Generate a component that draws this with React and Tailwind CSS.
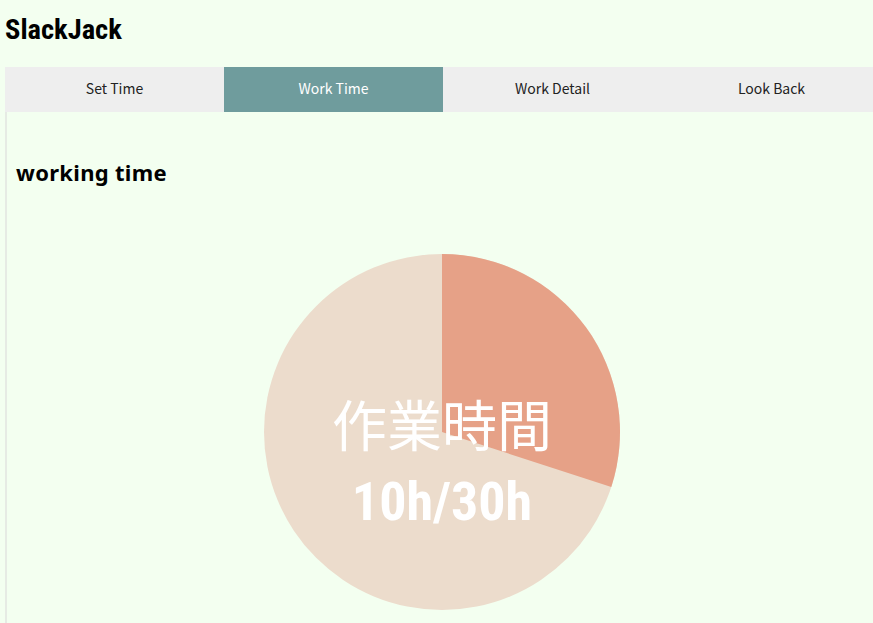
import React from "react";

const tabs = ["Set Time", "Work Time", "Work Detail", "Look Back"];

function polar(cx, cy, r, deg) {
  const a = ((deg - 90) * Math.PI) / 180;
  return [cx + r * Math.cos(a), cy + r * Math.sin(a)];
}

function WorkPie({ done, total, angle }) {
  const r = 178;
  const c = 180;
  const [x1, y1] = polar(c, c, r, 0);
  const [x2, y2] = polar(c, c, r, angle);
  return (
    <div className="relative w-[360px] h-[360px]">
      <svg width="360" height="360" viewBox="0 0 360 360">
        <circle cx={c} cy={c} r={r} fill="#ecdccc" />
        <path
          d={`M${c},${c} L${x1},${y1} A${r},${r} 0 0 1 ${x2},${y2} Z`}
          fill="#e6a187"
        />
      </svg>
      <div className="absolute inset-0 flex flex-col items-center justify-center pt-[60px] text-white">
        <p className="text-[55px] leading-none font-['Noto_Sans_CJK_JP',sans-serif] font-normal">
          作業時間
        </p>
        <p className="text-[54px] leading-none font-bold font-['Roboto_Condensed','Liberation_Sans_Narrow',Roboto,sans-serif] mt-[25px]">
          {done}h/{total}h
        </p>
      </div>
    </div>
  );
}

export default function App() {
  return (
    <div className="h-[623px] overflow-hidden bg-[#f3fff0] pl-[5px]">
      <h1 className="pt-[12px] pb-[19px] text-[28.5px] leading-9 font-bold text-black font-['Roboto_Condensed','Liberation_Sans_Narrow',Roboto,sans-serif]">
        SlackJack
      </h1>
      <div className="grid grid-cols-4 w-[876px] h-[45px] bg-[#eeeeee] text-[14px] font-['Noto_Sans_CJK_JP','Noto_Sans',sans-serif]">
        {tabs.map((tab) => (
          <div
            key={tab}
            className={`flex items-center justify-center pb-[2px] ${
              tab === "Work Time" ? "bg-[#6f9c9d] text-white" : "text-[#222]"
            }`}
          >
            {tab}
          </div>
        ))}
      </div>
      <div className="border-l-2 border-[#e6ebe4] h-[520px] pl-[9px]">
        <h2 className="pt-[46px] text-[22px] leading-7 tracking-[0.3px] font-bold text-black font-['Noto_Sans','Noto_Sans_CJK_JP',sans-serif]">
          working time
        </h2>
        <div className="mt-[66px] ml-[246px]">
          <WorkPie done={10} total={30} angle={108} />
        </div>
      </div>
    </div>
  );
}
